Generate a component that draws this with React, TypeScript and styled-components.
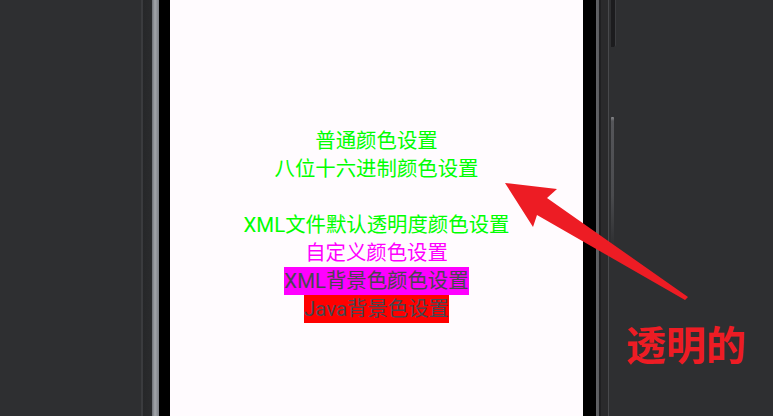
import React from "react";
import styled, { createGlobalStyle } from "styled-components";

const Global = createGlobalStyle`
  html, body { margin: 0; padding: 0; background: #2e2f31; overflow: hidden; }
  #root { width: 773px; height: 416px; }
`;

const Stage = styled.div`
  position: relative;
  width: 773px;
  height: 416px;
  display: flex;
  background: #2e2f31;
  overflow: hidden;
`;

const LeftSpace = styled.div`
  width: 141px;
  flex: none;
`;

const LeftBezel = styled.div`
  width: 29px;
  flex: none;
  background: linear-gradient(
    to right,
    #3a3b3e 0px,
    #3a3b3e 2px,
    #262729 2px,
    #2a2b2d 11px,
    #6d7076 11px,
    #a3a6ab 14px,
    #7a7d83 18px,
    #000 18px,
    #000 29px
  );
`;

const Screen = styled.main`
  width: 413px;
  flex: none;
  background: #fffbfe;
  display: flex;
  flex-direction: column;
  align-items: center;
  padding-top: 127px;
  box-sizing: border-box;
  font-family: Roboto, "Noto Sans CJK SC", sans-serif;
`;

const RightBezel = styled.div`
  width: 26px;
  flex: none;
  background: linear-gradient(
    to right,
    #000 0px,
    #000 13px,
    #626366 13px,
    #5a5b5e 16px,
    #1f1f21 16px,
    #1f1f21 18px,
    #2a2a2c 18px,
    #2a2a2c 25px,
    #48494c 25px,
    #48494c 26px
  );
`;

const RightSide = styled.div`
  flex: 1;
  display: flex;
  flex-direction: column;
  padding-left: 2px;
`;

const TopButton = styled.div`
  width: 4px;
  height: 47px;
  background: #1c1c1e;
  border-right: 1px solid #3c3d40;
  border-bottom-right-radius: 2px;
`;

const SideButton = styled.div`
  margin-top: 70px;
  width: 3px;
  height: 130px;
  background: linear-gradient(to bottom, #8a8b8e 0px, #55565a 4px, #4a4b4e 60%, #2e2f31 100%);
  border-radius: 1px;
`;

const Line = styled.div<{ $color: string; $bg?: string }>`
  font-size: 20.4px;
  line-height: 28px;
  height: 28px;
  color: ${(p) => p.$color};
  background: ${(p) => p.$bg ?? "transparent"};
  white-space: nowrap;
`;

const Overlay = styled.svg`
  position: absolute;
  left: 0;
  top: 0;
  width: 773px;
  height: 416px;
  pointer-events: none;
`;

const Label = styled.div`
  position: absolute;
  left: 626px;
  top: 323px;
  font-family: "Noto Sans CJK SC", sans-serif;
  font-weight: 700;
  font-size: 40px;
  line-height: 1;
  color: #ed1c24;
  white-space: nowrap;
`;

export default function App() {
  return (
    <>
      <Global />
      <Stage>
        <LeftSpace />
        <LeftBezel />
        <Screen>
          <Line $color="#00ff00">普通颜色设置</Line>
          <Line $color="#00ff00">八位十六进制颜色设置</Line>
          <Line $color="transparent">透明颜色设置</Line>
          <Line $color="#00ff00">XML文件默认透明度颜色设置</Line>
          <Line $color="#ff00ff">自定义颜色设置</Line>
          <Line $color="#4a4650" $bg="#ff00ff">XML背景色颜色设置</Line>
          <Line $color="#4a4650" $bg="#ff0000">Java背景色设置</Line>
        </Screen>
        <RightBezel />
        <RightSide>
          <TopButton />
          <SideButton />
        </RightSide>
        <Overlay viewBox="0 0 773 416">
          <polygon
            points="505,183 557,189 547,198 688,297 685,300 537,215 533,227"
            fill="#ed1c24"
          />
        </Overlay>
        <Label>透明的</Label>
      </Stage>
    </>
  );
}
